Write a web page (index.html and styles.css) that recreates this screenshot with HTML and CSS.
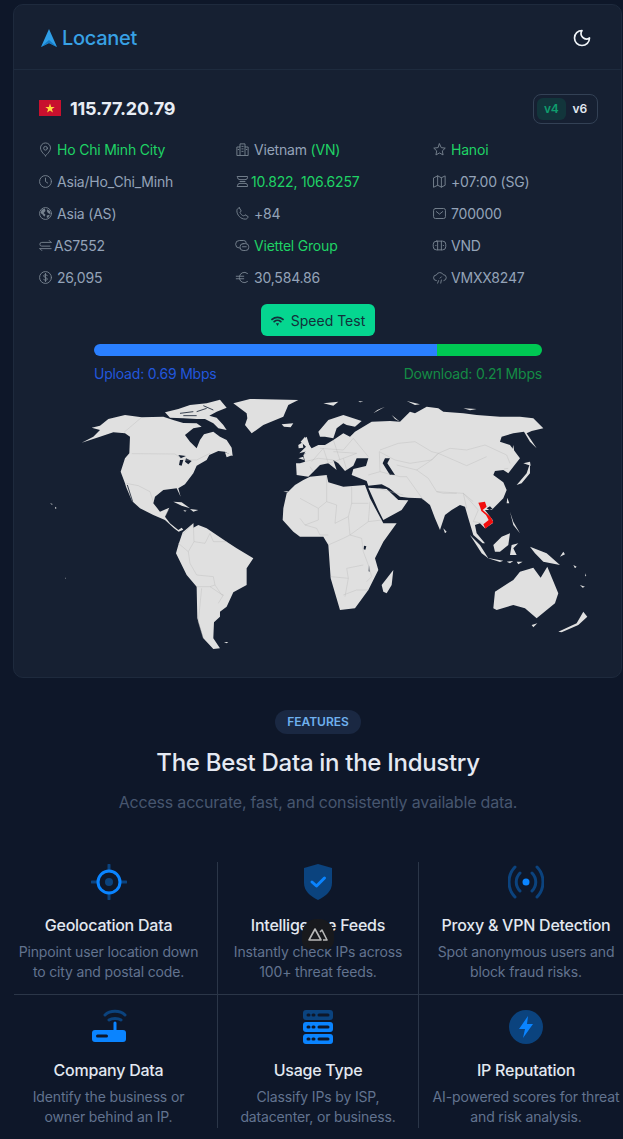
FILE: index.html
```html
<!DOCTYPE html>
<html lang="en">
<head>
    <meta charset="UTF-8">
    <title>Locanet</title>
    <link rel="stylesheet" href="styles.css">
</head>
<body>
<div class="card">
    <div class="card-head">
        <div class="logo">
            <svg width="18" height="20" viewBox="0 0 18 20"><path fill="#2f9fe8" d="M9 1l8 18-8-4-8 4z"/><path fill="#1579c4" d="M1 19l8-7 8 7-8-4z"/></svg>
            <span>Locanet</span>
        </div>
        <svg class="moon" width="20" height="20" viewBox="0 0 24 24"><path d="M12 3a6.5 6.5 0 0 0 9 9 9 9 0 1 1-9-9z"/></svg>
    </div>
    <div class="card-body">
        <div class="ip-row">
            <div class="ip">
                <svg width="22" height="16" viewBox="0 0 22 16"><rect width="22" height="16" fill="#c8102e"/><path fill="#ffd83d" d="M11 3.6l1.2 3.3h3.5l-2.8 2.1 1 3.4-2.9-2-2.9 2 1-3.4-2.8-2.1h3.5z"/></svg>
                <span>115.77.20.79</span>
            </div>
            <div class="toggle"><span class="on">v4</span><span>v6</span></div>
        </div>

        <div class="info">
            <div class="item"><svg viewBox="0 0 24 24"><path d="M12 22s8-6.5 8-12.5a8 8 0 0 0-16 0C4 15.5 12 22 12 22z"/><circle cx="12" cy="10" r="3"/></svg><span class="green">Ho Chi Minh City</span></div>
            <div class="item"><svg viewBox="0 0 24 24"><path d="M3 21V8h5V3h8v5h5v13zM8 8v13M16 8v13M11 7h2M11 11h2M11 15h2M5 12h1M18 12h1"/></svg><span>Vietnam <b class="green">(VN)</b></span></div>
            <div class="item"><svg viewBox="0 0 24 24"><path d="M12 3l2.800 6 6.400.8-4.700 4.400 1.200 6.500-5.700-3.200-5.700 3.200 1.200-6.500-4.700-4.400 6.400-.8z"/></svg><span class="green">Hanoi</span></div>

            <div class="item"><svg viewBox="0 0 24 24"><circle cx="12" cy="12" r="9.5"/><path d="M12 6.5V12l3.500 2.500"/></svg><span>Asia/Ho_Chi_Minh</span></div>
            <div class="item tight"><svg viewBox="0 0 24 24"><path d="M4 4h16v2a4 3 0 0 1-4 3H8a4 3 0 0 1-4-3zM4 20h16v-2a4 3 0 0 0-4-3H8a4 3 0 0 0-4 3zM8 12h8"/></svg><span class="green">10.822, 106.6257</span></div>
            <div class="item"><svg viewBox="0 0 24 24"><path d="M3 6l6-3 6 3 6-3v15l-6 3-6-3-6 3zM9 3v15M15 6v15"/></svg><span>+07:00 (SG)</span></div>

            <div class="item"><svg viewBox="0 0 24 24"><circle cx="12" cy="12" r="9.5"/><path class="fill" d="M6 6l5-2 1 4-3 3 3 3-2 3-3-4-3-2zM15 5l4 3 1 5-4-2-2-3zM14 15l5-1-3 5-2-1z"/></svg><span>Asia (AS)</span></div>
            <div class="item"><svg viewBox="0 0 24 24"><path d="M7 3l3 5-2 2c1 3 3 5 6 6l2-2 5 3c-.5 2.500-2 4-4.500 4C9 21 3 14.500 3 7.500 3 5 4.500 3.500 7 3z"/></svg><span>+84</span></div>
            <div class="item"><svg viewBox="0 0 24 24"><rect x="2.5" y="4" width="19" height="16" rx="3"/><path d="M7 9l5 4 5-4"/></svg><span>700000</span></div>

            <div class="item tight"><svg viewBox="0 0 24 24"><path d="M21 7H6a3 3 0 0 0 0 6h13M3 17h18M18 4l3 3M6 20l-3-3"/></svg><span>AS7552</span></div>
            <div class="item"><svg viewBox="0 0 24 24"><path d="M8 16H7a4 4 0 0 1 0-12h7a4 4 0 0 1 4 4"/><rect x="8" y="9" width="14" height="11" rx="5"/><path d="M12 14h6"/></svg><span class="green">Viettel Group</span></div>
            <div class="item"><svg viewBox="0 0 24 24"><rect x="2" y="5" width="20" height="14" rx="5"/><path d="M9 5v14M15 5v14M6 12h.5M18 12h.5"/></svg><span>VND</span></div>

            <div class="item"><svg viewBox="0 0 24 24"><circle cx="12" cy="12" r="9.5"/><path d="M15 9c-1-2-6-2-6 .5S15 12 15 14.500 10 17 9 15M12 5.500v13"/></svg><span>26,095</span></div>
            <div class="item"><svg viewBox="0 0 24 24"><path d="M20 5.500A8 8 0 0 0 7 12a8 8 0 0 0 13 6.500M2 10h12M2 14h12"/></svg><span>30,584.86</span></div>
            <div class="item"><svg viewBox="0 0 24 24"><path d="M7 17a4.500 4.500 0 0 1 0-9 6 6 0 0 1 11-.5 4.800 4.800 0 0 1 1 9.500M9 21l1.500-4M14 21l1-5M13 13l2-2"/></svg><span>VMXX8247</span></div>
        </div>

        <div class="speed">
            <button class="speed-btn">
                <svg width="13" height="13" viewBox="0 0 24 24"><path d="M2 10a15 15 0 0 1 20 0M6 14a9 9 0 0 1 12 0"/><path class="dot" d="M12 22l-3-5h6z"/></svg>
                Speed Test
            </button>
            <div class="bar"><div class="bar-up"></div><div class="bar-down"></div></div>
            <div class="bar-labels"><span class="up">Upload: 0.69 Mbps</span><span class="down">Download: 0.21 Mbps</span></div>
        </div>

        <svg class="map" width="550" height="265" viewBox="50 395 550 265">
            <!-- americas, coords read off at 3x -->
            <g transform="translate(50 395) scale(.3333)">
                <path class="land" d="M95 143L130 125 150 105 125 98 150 92 175 72 225 60 275 67 340 65 372 76 400 84 440 85 455 95 430 100 405 120 420 140 440 160 450 135 462 118 490 110 510 125 530 135 545 158 548 183 525 170 505 168 478 180 470 195 440 212 430 235 405 268 385 280 392 305 380 280 340 285 315 305 310 325 330 350 358 338 345 365 360 385 385 405 395 398 400 404 386 410 372 400 345 375 310 360 270 340 246 318 228 275 225 265 212 230 225 190 238 175 240 125 225 115 190 112 150 125Z"/>
                <path class="land" d="M345 52L385 42 420 30 470 25 510 14 530 38 500 50 478 62 500 68 520 90 530 105 505 100 490 85 465 72 440 72 400 70 360 68ZM550 25L600 12 745 15 715 30 700 65 640 90 605 115 585 90 592 70 590 55ZM695 88L730 85 722 97 702 95ZM370 320L395 322 420 340 395 332ZM420 342L445 345 430 350ZM400 345L410 347 405 350ZM522 741L535 741 530 745ZM525 172L548 180 530 187ZM745 150L758 142 760 158 746 160ZM770 125L778 150 792 170 762 176 775 155 760 135Z"/>
                <path class="land" d="M398 412L430 385 430 398 445 390 470 400 530 440 560 460 610 490 590 520 590 570 550 592 530 635 510 650 510 665 492 682 490 730 510 760 490 762 460 730 442 670 440 575 410 540 378 475 385 450Z"/>
                <path class="dark" d="M385 180L408 183 392 190ZM390 195L400 195 395 212 387 210ZM408 190L425 198 415 208 405 200Z"/>
                <path class="slit" d="M390 55L430 50M440 50L470 40M460 32L490 45M400 62L440 62M232 270L248 320"/>
                <path class="bd" d="M222 112L275 67M245 176L375 177 400 195 440 195 480 175M228 265L265 272 300 290 310 320M345 365L355 345M398 418L425 390M430 385L432 440 415 470 385 445M432 440L465 445 480 415M480 415L490 440 530 440M415 470L420 505 440 540 490 545 495 570 515 600 520 600 505 625M440 575L480 575 495 570M455 580L445 680 460 730M480 575L510 595 520 600"/>
                <path class="land" d="M15 335l5 4-4 3zM0 325l8 2-2 2zM45 548l3 1-2 2zM700 290l15-2-4 4z"/>
            </g>
            <!-- old world -->
            <g transform="translate(300 395) scale(.3333)">
                <path class="land" d="M-50 340L-40 295-15 270 10 255 30 245 80 240 85 262 130 275 195 270 210 310 250 385 290 385 250 440 225 490 235 525 205 585 165 640 120 645 92 550 85 450 70 425 0 425-20 410-52 375Z"/>
                <path class="land" d="M-12 205L0 205 15 200 10 180 35 160 55 150 75 150 100 135 130 115 150 125 165 110 215 80 270 78 300 80 330 50 345 55 380 35 415 40 430 50 490 55 530 60 600 65 660 65 700 70 730 100 695 108 680 115 710 160 690 140 672 110 640 115 605 125 600 140 630 150 660 190 640 215 625 235 610 225 585 228 580 240 610 262 620 285 610 310 575 345 555 345 578 375 578 385 555 400 540 385 525 390 530 415 555 445 548 445 520 420 505 370 495 335 480 330 455 345 435 360 420 405 405 370 390 330 365 310 325 308 300 305 268 280 245 268 205 272 200 258 155 240 160 222 198 213 205 190 170 190 160 212 135 228 115 205 100 195 110 225 85 205 60 210 40 230 25 245-10 240Z"/>
                <path class="land" d="M205 278L260 282 295 315 325 316 305 345 250 375 235 345ZM55 110L85 75 130 60 185 78 165 95 140 90 130 85 110 100 100 130 75 125 60 125ZM510 420L540 450 565 490 545 475ZM560 488L610 497 600 501ZM620 500L640 498 630 505ZM650 500L668 500 655 508ZM580 450L605 425 630 415 625 450 600 470 585 470ZM635 450L655 445 640 460 650 480 630 480ZM630 350L640 380 660 415 640 390ZM622 308L628 325 620 325ZM690 455L740 475 780 510 730 500 705 475ZM585 590L640 555 660 530 700 518 722 548 742 515 775 595 765 625 710 670 675 640 640 630 590 645 580 640ZM695 690L712 685 700 697ZM775 710L830 685 850 650 862 665 835 690 785 712ZM250 590L245 570 280 525 275 570 260 595ZM430 400L440 410 435 415ZM650 270L680 235 690 205 690 235 665 265ZM670 205L690 200 692 212ZM70 25L115 20 100 32ZM175 18L190 20 180 22ZM220 55L255 35 232 45ZM275 60L300 80 285 72ZM320 18L360 28 345 30ZM490 40L530 42 510 46ZM-5 190L10 185 12 195ZM640 150L645 185 635 175ZM2 140L15 125 35 165-2 175 18 155ZM820 510L830 515 825 520ZM790 470L795 478 780 485ZM840 570L855 575 848 578ZM855 535l4 8-3 1z"/>
                <path class="dark" d="M255 190L270 190 262 205 285 240 270 240 248 205ZM192 452l7 2-3 10-5-1zM207 510l2 20-3-1zM560 340l10-6 8 8-10 3z"/>
                <path class="vn" d="M535 323L555 320 560 335 548 345 572 366 580 382 556 401 550 388 566 375 558 360 544 348 540 335Z"/>
                <path class="bd" d="M0 310L55 340 80 320 110 330M80 240L80 320M155 275L155 325 205 325M55 340L55 375 15 390M0 370L15 390 50 400 60 420 85 420M110 330L105 385 145 365 155 325M145 365L150 420 205 380 210 320M205 380L245 375M150 420L185 430 190 470M85 450L130 430 150 420M190 470L205 510 215 545 200 560M92 545L145 550 140 520 190 510M130 600L170 585 205 585M145 550L135 605M240 165L295 145 345 140 395 170 415 175 450 160 500 165 555 150 620 180 630 205M415 175L395 195 415 175 500 212 560 185M238 170L285 195 330 205 395 195M290 210L350 225 395 195M320 245L345 280 370 315M320 245L300 245 240 230 205 240M385 250L410 290 490 295 520 320M410 290L430 295 470 295M490 295L500 340M535 345L520 380 550 385M235 280L310 300M35 200L70 160M85 205L130 190 170 175M60 160L130 165 160 130M100 135L120 195M55 190L100 195M625 220L612 222M15 200L55 190M70 160L85 205M100 170L170 175M130 190L140 225M30 215L40 230M160 130L205 185M238 170L240 230M350 225L385 250M490 295L535 345"/>
            </g>
        </svg>
    </div>
</div>

<div class="features">
    <div class="pill">FEATURES</div>
    <h2>The Best Data in the Industry</h2>
    <p class="sub">Access accurate, fast, and consistently available data.</p>
</div>

<div class="grid">
    <div class="cell">
        <svg viewBox="0 0 36 36" width="36" height="36"><path class="dim-s" d="M18 1v6M18 29v6M1 18h6M29 18h6"/><circle class="dim-f" cx="18" cy="18" r="4"/><circle class="bright-s" cx="18" cy="18" r="11"/></svg>
        <h3>Geolocation Data</h3>
        <p>Pinpoint user location down<br>to city and postal code.</p>
    </div>
    <div class="cell">
        <svg viewBox="0 0 36 36" width="36" height="36"><path class="dim-f" d="M18 0l14 4v15c0 8-6 13-14 17C10 32 4 27 4 19V4z"/><path class="bright-s" d="M12 18l4.5 4 8-8"/></svg>
        <h3>Intelligence Feeds</h3>
        <p>Instantly check IPs across<br>100+ threat feeds.</p>
    </div>
    <div class="cell">
        <svg viewBox="0 0 36 36" width="36" height="36"><path class="dim-s" d="M7 3C-1 11-1 25 7 33M29 3c8 8 8 22 0 30M12 9c-5 5-5 13 0 18M24 9c5 5 5 13 0 18"/><circle class="bright-f" cx="18" cy="18" r="3.5"/></svg>
        <h3>Proxy &amp; VPN Detection</h3>
        <p>Spot anonymous users and<br>block fraud risks.</p>
    </div>
    <div class="rule"></div>
    <div class="cell lower">
        <svg viewBox="0 0 36 36" width="36" height="36"><path class="dim-s" d="M14 6c5-5 15-5 20 0M18 11c3-2 9-2 12 0"/><path class="bright-s" d="M24 14v9"/><path class="bright-f" d="M4 21h28a3 3 0 0 1 3 3v6a3 3 0 0 1-3 3H4a3 3 0 0 1-3-3v-6a3 3 0 0 1 3-3z"/><rect class="slot" x="5" y="25.5" width="12" height="3" rx="1.5"/></svg>
        <h3>Company Data</h3>
        <p>Identify the business or<br>owner behind an IP.</p>
    </div>
    <div class="cell lower">
        <svg viewBox="0 0 36 36" width="36" height="36"><rect class="dim-f" x="3" y="1" width="30" height="10" rx="3"/><rect class="bright-f" x="3" y="13" width="30" height="10" rx="3"/><rect class="bright-f" x="3" y="25" width="30" height="10" rx="3"/><path class="slot-s" d="M8 6h1M13 6h1M19 6h9M8 18h1M13 18h1M19 18h9M8 30h1M13 30h1M19 30h9"/></svg>
        <h3>Usage Type</h3>
        <p>Classify IPs by ISP,<br>datacenter, or business.</p>
    </div>
    <div class="cell lower">
        <svg viewBox="0 0 36 36" width="36" height="36"><circle class="dim-f" cx="18" cy="18" r="17"/><path class="bright-f" d="M20 7l-9 13h6l-2 9 10-14h-6z"/></svg>
        <h3>IP Reputation</h3>
        <p>AI-powered scores for threat<br>and risk analysis.</p>
    </div>
</div>

<div class="nuxt">
    <svg width="20" height="14" viewBox="0 0 20 14"><path d="M1 13L7 2l6 11zM12 5l2-2 5 10h-4"/></svg>
</div>
</body>
</html>
```

FILE: styles.css
```css
*{margin: 0;padding: 0;box-sizing: border-box;}
body{position: relative;height: 1139px;overflow: hidden;background: #0e1729;font-family: Inter, "Noto Sans", sans-serif;font-size: 14px;letter-spacing: -.2px;color: #94a3b8;}

.card{width: 609px;height: 674px;margin: 4px 0 0 13px;background: #162032;border: 1px solid #1e2a3d;border-radius: 10px;}
.card-head{height: 65px;display: flex;align-items: center;justify-content: space-between;padding: 2px 29px 0 26px;border-bottom: 1px solid #1e2b3e;}
.logo{display: flex;align-items: center;gap: 4px;font-size: 20px;font-weight: 500;letter-spacing: -.3px;color: #38a1e4;}
.moon path{fill: none;stroke: #f1f5f9;stroke-width: 2;stroke-linecap: round;stroke-linejoin: round;}
.card-body{padding: 24px 23px 0 25px;}

.ip-row{display: flex;align-items: center;justify-content: space-between;height: 30px;}
.ip{display: flex;align-items: center;gap: 9px;margin-bottom: 2px;font-size: 18px;font-weight: 700;color: #e8edf5;}
.toggle{display: flex;align-items: center;height: 30px;width: 65px;padding: 3px;border: 1px solid #334155;border-radius: 8px;font-size: 12px;font-weight: 600;color: #e2e8f0;}
.toggle span{flex: 1;height: 22px;line-height: 22px;text-align: center;border-radius: 6px;}
.toggle .on{background: #12353b;color: #0f9d6e;}

.info{display: grid;grid-template-columns: repeat(3,197px);grid-auto-rows: 32px;margin-top: 9px;}
.item{display: flex;align-items: center;gap: 4px;white-space: nowrap;}
.item.tight{gap: 1px;}
.item svg{width: 15px;height: 15px;margin-left: -1px;flex: none;fill: none;stroke: #76828f;stroke-width: 1.5;stroke-linecap: round;stroke-linejoin: round;}
.item svg .fill{fill: #76828f;stroke: none;}
.green{color: #1fd365;}
b.green{font-weight: 400;}

.speed{display: flex;flex-direction: column;align-items: center;margin: 11px 1px 0 0;}
.speed-btn{display: flex;align-items: center;gap: 7px;height: 32px;width: 114px;justify-content: center;border: none;border-radius: 6px;background: #05d690;font-family: inherit;font-size: 14px;color: #13303b;}
.speed-btn svg path{fill: none;stroke: #13303b;stroke-width: 3.5;stroke-linecap: round;}
.speed-btn svg .dot{fill: #13303b;stroke: none;}
.bar{display: flex;width: 448px;height: 12px;margin-top: 8px;border-radius: 6px;overflow: hidden;}
.bar-up{width: 343px;background: #2a7fff;}
.bar-down{flex: 1;background: #00c853;}
.bar-labels{display: flex;justify-content: space-between;width: 448px;margin-top: 9px;line-height: 18px;}
.up{color: #2257dd;}
.down{color: #148c45;}

.map{display: block;margin: 12px 0 0 11px;}
.land{fill: #e0e0e0;}
.dark{fill: #162032;}
.slit{fill: none;stroke: #162032;stroke-width: 2.5;}
.vn{fill: #f20d0d;}
.bd{fill: none;stroke: #bcbcbc;stroke-width: 1.2;}

.features{padding-left: 13px;text-align: center;}
.pill{width: 86px;height: 24px;margin: 32px 0 0 262px;line-height: 24px;border-radius: 12px;background: #1a2842;font-size: 12px;font-weight: 600;letter-spacing: 0;color: #6fb0ee;}
h2{margin-top: 13px;font-size: 24px;line-height: 32px;font-weight: 500;letter-spacing: -.3px;color: #e5e9f2;}
.sub{margin-top: 11px;font-size: 16px;line-height: 24px;letter-spacing: -.2px;color: #47566f;}

.grid{display: grid;grid-template-columns: 218px 201px 214px;width: 633px;margin-top: 48px;}
.cell{height: 132px;padding-top: 2px;text-align: center;border-right: 1px solid #2b3648;}
.cell:nth-child(3),.cell:last-child{border-right: none;}
.cell.lower{height: 133px;padding-top: 14px;}
.rule{grid-column: 1 / -1;height: 1px;margin-left: 14px;background: #2b3648;}
.cell svg{display: block;margin: 0 auto;}
.cell h3{margin-top: 13px;font-size: 16px;line-height: 24px;font-weight: 500;letter-spacing: -.25px;color: #e2e8f0;}
.cell p{margin-top: 5px;font-size: 14px;line-height: 20px;letter-spacing: -.15px;color: #62738f;}

.dim-s{fill: none;stroke: #0b437e;stroke-width: 3;stroke-linecap: round;}
.dim-f{fill: #0b437e;}
.bright-s{fill: none;stroke: #0a84ff;stroke-width: 3;stroke-linecap: round;stroke-linejoin: round;}
.bright-f{fill: #0a84ff;}
.slot{fill: #0e1729;}
.slot-s{fill: none;stroke: #0e1729;stroke-width: 3;stroke-linecap: round;}

.nuxt{position: absolute;left: 302px;top: 919px;width: 32px;height: 30px;display: flex;align-items: center;justify-content: center;border-radius: 15px 15px 8px 8px;background: #18191d;}
.nuxt path{fill: none;stroke: #b8b8b8;stroke-width: 1.6;stroke-linejoin: round;}
```
